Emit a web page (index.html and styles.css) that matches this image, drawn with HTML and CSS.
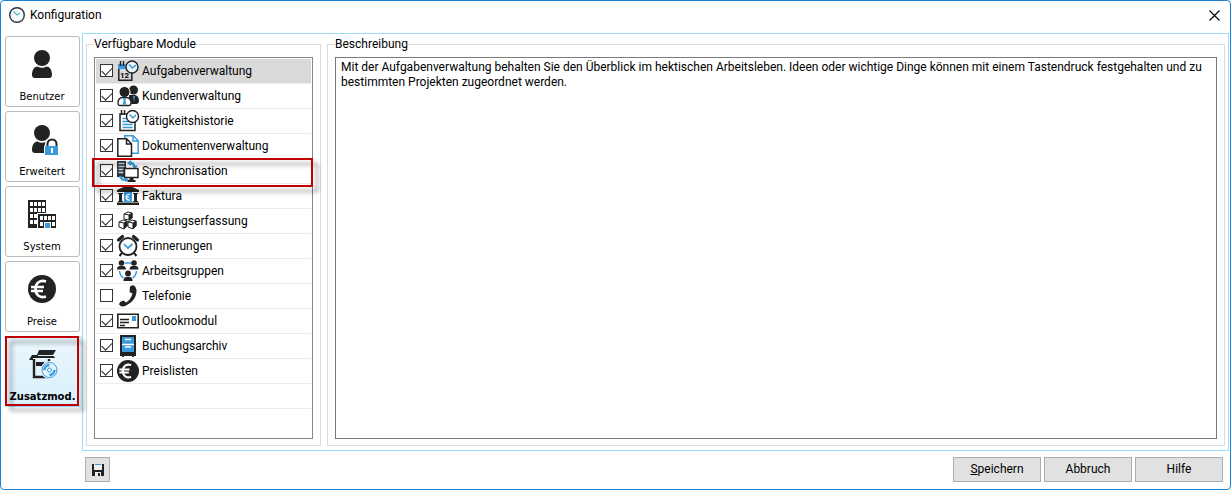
FILE: index.html
```html
<!DOCTYPE html>
<html lang="de">

<head>
    <meta charset="UTF-8">
    <meta name="viewport" content="width=device-width, initial-scale=1.0">
    <title>Konfiguration</title>
    <link rel="stylesheet" href="styles.css">
</head>

<body>

    <div class="window">
        <header class="titlebar">
            <svg class="app-icon" viewBox="0 0 16 16">
                <circle cx="8" cy="8" r="7.3" fill="#f4fafa" stroke="#2c3540" stroke-width="1.4"/>
                <path d="M4.500 4.500 8 8 11 6" fill="none" stroke="#4db8c0" stroke-width="1.3"/>
            </svg>
            <h1>Konfiguration</h1>
            <button class="close" type="button" aria-label="Schließen">
                <svg viewBox="0 0 11 11"><path d="M.5.5l10 10M10.500.5l-10 10" stroke="#000" stroke-width="1.1"/></svg>
            </button>
        </header>

        <div class="main">
            <nav class="tabs">
                <button class="tab" type="button">
                    <svg viewBox="0 0 28 28" fill="#222">
                        <circle cx="14" cy="8" r="8"/>
                        <path d="M4 25c0-5 2-8 5.500-8.500q4.500 2.500 9 0C22 17 24 20 24 25q0 3-3 3H7q-3 0-3-3z"/>
                    </svg>
                    <span>Benutzer</span>
                </button>
                <button class="tab" type="button">
                    <svg viewBox="0 0 28 28" fill="#222">
                        <circle cx="14" cy="8" r="8"/>
                        <path d="M4 25c0-5 2-8 5.500-8.500q4.500 2.500 9 0l-2.500 5V28H7q-3 0-3-3z"/>
                        <path d="M19.500 22v-3a4.500 4.500 0 0 1 9 0v3" fill="none" stroke="#fff" stroke-width="5"/>
                        <path d="M19.500 22v-3a4.500 4.500 0 0 1 9 0v3" fill="none" stroke="#222" stroke-width="2"/>
                        <path fill="#3a9bdc" d="M17 21h13v9H17z"/>
                        <path fill="#fff" d="M23 23h2v5h-2z"/>
                    </svg>
                    <span>Erweitert</span>
                </button>
                <button class="tab" type="button">
                    <svg viewBox="0 0 28 28">
                        <path fill="#222" d="M0 0h18v28H0z"/>
                        <path fill="#fff" d="M2 2h3v4H2zM6 2h3v4H6zM10 2h3v4h-3zM14 2h3v4h-3zM2 8h3v4H2zM6 8h3v4H6zM10 8h3v4h-3zM14 8h3v4h-3zM2 14h3v4H2zM6 14h3v4H6zM2 20h3v4H2zM6 20h3v4H6zM9 13h9v15H9z"/>
                        <path fill="#222" d="M10 14h18v14H10z"/>
                        <path fill="#fff" d="M12 16h3v4h-3zM16 16h3v4h-3zM20 16h3v4h-3zM24 16h3v4h-3zM12 22h3v4h-3zM24 22h3v4h-3zM16 22h7v6h-7z"/>
                        <path fill="#3a9bdc" d="M17 23h5v5h-5z"/>
                    </svg>
                    <span>System</span>
                </button>
                <button class="tab" type="button">
                    <svg viewBox="0 0 28 28">
                        <circle cx="14" cy="14" r="14" fill="#222"/>
                        <path d="M18 6.500C12 4.500 7.500 8 7.500 14s4.500 9.500 10.500 7.500M3 12h13M3 16h12" fill="none" stroke="#fff" stroke-width="2.600"/>
                    </svg>
                    <span>Preise</span>
                </button>
                <button class="tab active" type="button">
                    <svg viewBox="0 0 28 28">
                        <path d="M5 9v18h15V9" fill="none" stroke="#222" stroke-width="2.400"/>
                        <path fill="#222" d="M10 0h17l-3 5 2 3H4v2H0l3-5h5zM7 12h8v4H7z"/>
                        <path d="M9 5.500h16" stroke="#e4f3fc"/>
                        <circle cx="20.500" cy="20" r="9" fill="#e4f3fc"/>
                        <g fill="none" stroke="#3a9bdc">
                            <circle cx="20.500" cy="20" r="7.500"/>
                            <circle cx="20.500" cy="20" r="2"/>
                            <path d="M15.500 20a5 5 0 0 1 5-5M25.500 20a5 5 0 0 1-5 5" stroke-width="2.500"/>
                        </g>
                    </svg>
                    <span>Zusatzmod.</span>
                </button>
            </nav>

            <main class="panel">
                <fieldset class="modules">
                    <legend>Verfügbare Module</legend>
                    <ul class="module-list">
                        <li class="selected">
                            <input type="checkbox" id="m1" checked>
                            <label for="m1">
                                <svg viewBox="0 0 22 22">
                                    <path d="M1.800 9v11.200h13V12" fill="none" stroke="#222" stroke-width="1.500"/>
                                    <path fill="#3a9bdc" d="M1 4h9v5H1z"/>
                                    <path d="M3.500 1v5M6.500 1v5" stroke="#222" stroke-width="1.500"/>
                                    <text x="3" y="18" class="tiny">12</text>
                                    <circle cx="15" cy="7" r="6" fill="#eaf5fc" stroke="#222" stroke-width="1.400"/>
                                    <path d="M12 4.500l3.500 3.500L19 5" fill="none" stroke="#3a9bdc" stroke-width="1.500"/>
                                </svg>
                                Aufgabenverwaltung
                            </label>
                        </li>
                        <li>
                            <input type="checkbox" id="m2" checked>
                            <label for="m2">
                                <svg viewBox="0 0 22 22">
                                    <circle cx="16.500" cy="5" r="4.500" fill="#222"/>
                                    <path fill="#222" d="M12 10h6q4 1 4 6 0 3-3 3h-7z"/>
                                    <path fill="#3a9bdc" d="M16 11h2l-1 6z"/>
                                    <circle cx="7.500" cy="7" r="5.500" fill="#222" stroke="#fff"/>
                                    <path d="M1 18c0-3 1-5 4-5.500h5c3 .5 4 2.500 4 5.500 0 2-1 2.500-2 2.500H3c-1 0-2-.5-2-2.500z" fill="#fff" stroke="#222" stroke-width="1.300"/>
                                    <path fill="#3a9bdc" d="M6 13h3l-.5 2 .5 4-1.500 1.500L6 19l.5-4z"/>
                                </svg>
                                Kundenverwaltung
                            </label>
                        </li>
                        <li>
                            <input type="checkbox" id="m3" checked>
                            <label for="m3">
                                <svg viewBox="0 0 22 22">
                                    <path d="M3 4h15v16.500H3z" fill="#fff" stroke="#222" stroke-width="1.500"/>
                                    <path d="M5.500 8.500h6M5.500 11.500h8M5.500 14.500h10M5.500 17.500h10" stroke="#3a9bdc" stroke-width="1.500"/>
                                    <path d="M4.500 0v5M7.500 0v5" stroke="#222" stroke-width="1.500"/>
                                    <circle cx="15.500" cy="6.500" r="6" fill="#fff" stroke="#222" stroke-width="1.400"/>
                                    <path d="M12.500 4.500L16 8l3-3" fill="none" stroke="#3a9bdc" stroke-width="1.500"/>
                                </svg>
                                Tätigkeitshistorie
                            </label>
                        </li>
                        <li>
                            <input type="checkbox" id="m4" checked>
                            <label for="m4">
                                <svg viewBox="0 0 22 22" fill="#fff" stroke-width="1.500">
                                    <path d="M7.800.8h8.400l5 5v12.400H7.800zM16 1v5h5" stroke="#3a9bdc"/>
                                    <path d="M.8 3.800h8.700l5 5v12.400H.8zM9.500 4v5h5" stroke="#222"/>
                                </svg>
                                Dokumentenverwaltung
                            </label>
                        </li>
                        <li class="marked">
                            <input type="checkbox" id="m5" checked>
                            <label for="m5">
                                <svg viewBox="0 0 22 22">
                                    <path fill="#333" d="M0 1h9v16H0z"/>
                                    <path d="M1.500 3.500h6M1.500 6.500h6M1.500 9.500h5M1.500 12.500h5" stroke="#b5d8ef" stroke-width="1.300"/>
                                    <path d="M12 3q4-1 5.500 4M3 16q1 4 6 4" fill="none" stroke="#3a9bdc" stroke-width="2.400"/>
                                    <path fill="#3a9bdc" d="M10 3l4-3v6zM15 5.500h6L18 9zM8 17l4 3-4 2z"/>
                                    <path d="M7.500 8.500h13.500v9H7.500z" fill="#fff" stroke="#222" stroke-width="1.500"/>
                                    <path fill="#222" d="M12.500 18h4v2h2v2h-8v-2h2z"/>
                                </svg>
                                Synchronisation
                            </label>
                        </li>
                        <li>
                            <input type="checkbox" id="m6" checked>
                            <label for="m6">
                                <svg viewBox="0 0 22 22">
                                    <path fill="#222" d="M11 0l11 5v2H0V5zM1 8h5v1H5v7h1v1H1v-1h1V9H1zM16 8h5v1h-1v7h1v1h-5v-1h1V9h-1zM0 17.500h22V20H0z"/>
                                    <path fill="#3a9bdc" d="M7 7h8v10H7z"/>
                                    <path d="M13 9.500q-3-1-3.500 2.500t3.500 3M8.500 12h3.500" fill="none" stroke="#fff" stroke-width="1.200"/>
                                </svg>
                                Faktura
                            </label>
                        </li>
                        <li>
                            <input type="checkbox" id="m7" checked>
                            <label for="m7">
                                <svg viewBox="0 0 22 22" stroke="#222" stroke-linejoin="round">
                                    <g fill="#fff">
                                        <path d="M7 4l4-2 4 1v5l-3 2-5-1z"/>
                                        <path d="M2 12l4-2 4 1v5l-3 3-5-2z"/>
                                        <path d="M11 12l4-2 4 1v5l-3 3-5-2z"/>
                                    </g>
                                    <g fill="#222">
                                        <path d="M12 5l3-2v5l-3 2zM7 13l3-2v5l-3 3zM16 13l3-2v5l-3 3z"/>
                                        <path d="M7 4l5 1M2 12l5 1M11 12l5 1"/>
                                    </g>
                                </svg>
                                Leistungserfassung
                            </label>
                        </li>
                        <li>
                            <input type="checkbox" id="m8" checked>
                            <label for="m8">
                                <svg viewBox="0 0 22 22">
                                    <path d="M1.500 5l4-3.500M20.500 5l-4-3.500" stroke="#222" stroke-width="3.200" stroke-linecap="round"/>
                                    <path d="M5 18l-2.500 3M17 18l2.500 3" stroke="#222" stroke-width="2"/>
                                    <circle cx="11" cy="11.500" r="8.500" fill="#fff" stroke="#222" stroke-width="1.800"/>
                                    <path d="M7 9l4 4 4.500-4" fill="none" stroke="#3a9bdc" stroke-width="1.700"/>
                                </svg>
                                Erinnerungen
                            </label>
                        </li>
                        <li>
                            <input type="checkbox" id="m9" checked>
                            <label for="m9">
                                <svg viewBox="0 0 22 22" fill="#222">
                                    <path d="M8 3.500q3-1.500 6 0M2.500 11q.5 5 4 7M19.500 11q-.5 5-4 7" fill="none" stroke="#3a9bdc" stroke-width="1.500"/>
                                    <circle cx="4.500" cy="3" r="2.800"/>
                                    <path d="M0 9.500q0-3.500 3-3.500h3q3 0 3 3.500z"/>
                                    <circle cx="17" cy="3" r="2.800"/>
                                    <path d="M12.500 9.500q0-3.500 3-3.500h3q3 0 3 3.500z"/>
                                    <circle cx="11" cy="13.500" r="2.900"/>
                                    <path d="M6.500 21q0-4 3-4h3q3 0 3 4z"/>
                                </svg>
                                Arbeitsgruppen
                            </label>
                        </li>
                        <li>
                            <input type="checkbox" id="m10">
                            <label for="m10">
                                <svg viewBox="0 0 22 22">
                                    <path fill="#222" d="M13 1.500l3-1.500q4 2 3.500 7-1 8-8 12-4 3-7 2.500L2 19.500l1-2.500 3.500-1.500L9 17.500q5-3 6.500-9l-3-1.500z"/>
                                </svg>
                                Telefonie
                            </label>
                        </li>
                        <li>
                            <input type="checkbox" id="m11" checked>
                            <label for="m11">
                                <svg viewBox="0 0 22 22">
                                    <path d="M.8 4.300h20.400v13.400H.8z" fill="#fff" stroke="#222" stroke-width="1.600"/>
                                    <path d="M3 9.500h9M3 12.500h9M3 15.500h5" stroke="#222" stroke-width="1.500"/>
                                    <path fill="#3a9bdc" d="M15 6h4v5h-4z"/>
                                </svg>
                                Outlookmodul
                            </label>
                        </li>
                        <li>
                            <input type="checkbox" id="m12" checked>
                            <label for="m12">
                                <svg viewBox="0 0 22 22">
                                    <path fill="#222" d="M3 0h16v21h-2v1h-2v-1H7v1H5v-1H3z"/>
                                    <path fill="#3a9bdc" d="M5 2h12v15H5z"/>
                                    <path d="M8 4.500h6M5 9.500h12M8 12h6" stroke="#fff" stroke-width="1.300"/>
                                </svg>
                                Buchungsarchiv
                            </label>
                        </li>
                        <li>
                            <input type="checkbox" id="m13" checked>
                            <label for="m13">
                                <svg viewBox="0 0 28 28">
                                    <circle cx="14" cy="14" r="14" fill="#222"/>
                                    <path d="M18 6.500C12 4.500 7.500 8 7.500 14s4.500 9.500 10.500 7.500M3 12h13M3 16h12" fill="none" stroke="#fff" stroke-width="2.600"/>
                                </svg>
                                Preislisten
                            </label>
                        </li>
                        <li></li>
                    </ul>
                </fieldset>

                <fieldset class="description">
                    <legend>Beschreibung</legend>
                    <textarea readonly aria-label="Beschreibung">Mit der Aufgabenverwaltung behalten Sie den Überblick im hektischen Arbeitsleben. Ideen oder wichtige Dinge können mit einem Tastendruck festgehalten und zu bestimmten Projekten zugeordnet werden.</textarea>
                </fieldset>
            </main>
        </div>

        <footer class="buttons">
            <button class="save" type="button" aria-label="Layout speichern">
                <svg viewBox="0 0 12 12">
                    <path fill="#222" d="M0 0h2v6h8V0h2v12H0z"/>
                    <path fill="#3a9bdc" d="M3 0h6v1H3z"/>
                    <path fill="#eee" d="M2 1h8v5H2zM3 8h6v4H3z"/>
                    <path fill="#222" d="M6 9h2v3H6z"/>
                </svg>
            </button>
            <button type="button"><u>S</u>peichern</button>
            <button type="button">Abbruch</button>
            <button type="button">Hilfe</button>
        </footer>
    </div>

</body>

</html>
```
FILE: styles.css
```css
* {
    box-sizing: border-box;
}

body {
    margin: 0;
    background: #fff;
    color: #000;
    font-family: Roboto, "Open Sans", sans-serif;
    font-size: 12px;
    line-height: 15px;
}

button,
textarea {
    font: inherit;
    color: inherit;
}

svg {
    display: block;
    flex: none;
    overflow: visible;
}

.window {
    display: flex;
    flex-direction: column;
    min-height: 100vh;
    border: 1px solid #1883d7;
    border-radius: 4px;
}

/* title bar */
.titlebar {
    display: flex;
    align-items: center;
    height: 32px;
    padding: 0 8px 4px;
}

.app-icon {
    width: 16px;
    height: 16px;
}

h1 {
    flex: 1;
    margin: 0 5px;
    font-size: 12px;
    font-weight: normal;
    line-height: 16px;
}

.close {
    padding: 2px;
    border: none;
    background: none;
}

.close svg {
    width: 11px;
    height: 11px;
}

/* tabs on the left and the panel */
.main {
    display: flex;
    flex: 1;
    padding: 0 1px 0 4px;
}

.tabs {
    display: flex;
    flex-direction: column;
    gap: 4px;
    width: 77px;
    padding-top: 3px;
}

.tab {
    display: flex;
    flex-direction: column;
    align-items: center;
    gap: 11px;
    width: 75px;
    height: 71px;
    padding: 13px 1px 0 0;
    border: 1px solid #bcbcbc;
    border-radius: 3px;
    background: #fff;
    font-family: "DejaVu Sans", sans-serif;
    font-size: 10px;
}

.tab svg {
    width: 28px;
    height: 28px;
}

.tab.active {
    position: relative;
    width: 77px;
    padding-right: 3px;
    border-color: #99ddfb;
    border-right: none;
    background: linear-gradient(#eaf6fd, #d9f0fc);
    font-weight: bold;
}

/* red frames round the open tab and the marked row */
.active::after,
.marked::after {
    content: "";
    position: absolute;
    border: 2px solid #c00000;
    filter: drop-shadow(5px 5px 2px rgba(0, 0, 0, 0.4));
    pointer-events: none;
}

.active::after {
    inset: -1px 3px 0 -1px;
}

.marked::after {
    inset: -1px -2px -4px -4px;
}

.panel {
    display: flex;
    flex: 1;
    gap: 6px;
    padding: 3px 3px 4px;
    border: 1px solid #99ddfb;
}

fieldset {
    display: flex;
    min-width: 0;
    margin: 0;
    padding: 5px 7px 6px;
    border: 1px solid #dcdcdc;
}

legend {
    padding: 0;
}

.modules {
    width: 235px;
}

.description {
    flex: 1;
}

.module-list {
    flex: 1;
    margin: 0;
    padding: 1px 1px 28px;
    border: 1px solid #828790;
    list-style: none;
}

.module-list li {
    display: flex;
    align-items: center;
    gap: 4px;
    height: 25px;
    padding-left: 4px;
    border-bottom: 1px solid #ececec;
}

.module-list .selected {
    background: #d9d9d9;
}

.module-list .marked {
    position: relative;
}

.module-list label {
    display: flex;
    align-items: center;
    gap: 3px;
}

.module-list svg {
    width: 22px;
    height: 22px;
}

.tiny {
    font-size: 8px;
    font-weight: bold;
}

input[type="checkbox"] {
    appearance: none;
    width: 13px;
    height: 13px;
    margin: 0 0 2px;
    border: 1px solid #333;
    background: #fff;
}

input[type="checkbox"]:checked::after {
    content: "";
    display: block;
    width: 9px;
    height: 5px;
    margin: 2px 1px;
    border-left: 1px solid #222;
    border-bottom: 1px solid #222;
    transform: rotate(-45deg);
}

textarea {
    flex: 1;
    padding: 2px 5px;
    border: 1px solid #7a7a7a;
    outline: none;
    resize: none;
}

/* bottom buttons */
.buttons {
    display: flex;
    gap: 3px;
    padding: 6px 7px 7px 84px;
}

.buttons button {
    width: 88px;
    height: 25px;
    padding: 0;
    border: 1px solid #adadad;
    background: #e1e1e1;
}

.buttons .save {
    display: flex;
    align-items: center;
    justify-content: center;
    width: 25px;
    margin-right: auto;
}

.save svg {
    width: 12px;
    height: 12px;
}
```
